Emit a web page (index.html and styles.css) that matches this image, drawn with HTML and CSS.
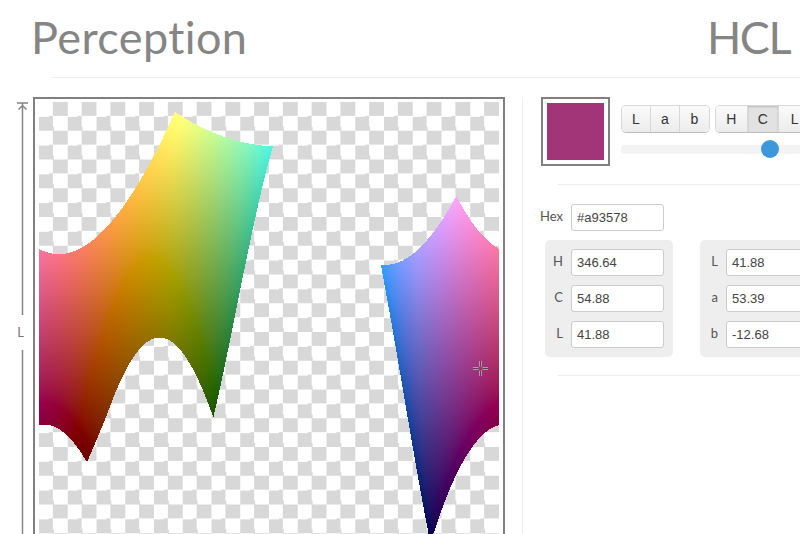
FILE: index.html
```html
<!DOCTYPE html>
<html>
<head>
  <title>Perception HCL</title>
  <link rel="stylesheet" href="styles.css">
</head>
<body>
  <header class="title-row">
    <h1>Perception</h1>
    <h2>HCL</h2>
  </header>
  <div class="title-rule"></div>

  <main class="content">
    <div class="axis">
      <svg class="axis-arrow" width="13" height="440" viewBox="0 0 13 440">
        <path d="M1 1H12M6.5 1.5V440M2.5 7.5L6.5 3.5L10.5 7.5" fill="none" stroke="#858585" stroke-width="1.5"/>
      </svg>
      <span class="axis-label">L</span>
    </div>

    <div class="plot">
      <div class="plot-area">
        <canvas id="slice" width="460" height="460"></canvas>
        <svg class="picker" width="17" height="17" viewBox="0 0 17 17">
          <path d="M8.5 1V6.5M8.5 10.5V16M1 8.5H6.5M10.5 8.5H16" stroke="#fff" stroke-opacity=".6" stroke-width="2.4"/>
          <path d="M8.5 1V6.5M8.5 10.5V16M1 8.5H6.5M10.5 8.5H16" stroke="#4a4a4a" stroke-width="1"/>
        </svg>
      </div>
    </div>

    <section class="side">
      <div class="color-row">
        <div class="swatch"><div class="swatch-fill"></div></div>
        <div class="controls">
          <div class="button-row">
            <div class="btn-group">
              <button>L</button><button>a</button><button>b</button>
            </div>
            <div class="btn-group wide">
              <button>H</button><button class="active">C</button><button>L</button>
            </div>
          </div>
          <div class="slider"><span class="knob"></span></div>
        </div>
      </div>

      <hr class="divider">

      <div class="field hex-field">
        <label for="hex">Hex</label>
        <input type="text" id="hex" value="#a93578">
      </div>

      <div class="panels">
        <div class="panel">
          <div class="field"><label>H</label><input type="text" value="346.64"></div>
          <div class="field"><label>C</label><input type="text" value="54.88"></div>
          <div class="field"><label>L</label><input type="text" value="41.88"></div>
        </div>
        <div class="panel">
          <div class="field"><label>L</label><input type="text" value="41.88"></div>
          <div class="field"><label>a</label><input type="text" value="53.39"></div>
          <div class="field"><label>b</label><input type="text" value="-12.68"></div>
        </div>
      </div>

      <hr class="divider">
    </section>
  </main>

  <script src="plot.js"></script>
</body>
</html>
```

FILE: styles.css
```css
html, body { margin: 0; height: 534px; overflow: hidden; background: #fff; }
body { width: 800px; font-family: "Liberation Sans", Arial, sans-serif; color: #444; }

.title-row { display: flex; justify-content: space-between; height: 77px; padding: 0 10px 0 31px; box-sizing: border-box; }
h1, h2 { margin: 0; font-family: Lato, sans-serif; font-weight: 400; font-size: 45px; line-height: 75px; color: #858585; font-variant-ligatures: none; }
h1 { letter-spacing: .4px; }
h2 { letter-spacing: -1.5px; }
.title-rule { height: 1px; margin-left: 51px; background: #eee; }

.content { display: flex; width: 1000px; padding-top: 19px; }

.axis { position: relative; flex: none; width: 33px; padding: 5px 0 0 16px; box-sizing: border-box; }
.axis-arrow { display: block; }
.axis-label { position: absolute; left: 15px; top: 218px; width: 11px; padding: 9px 0; background: #fff; text-align: center; font-family: Lato, sans-serif; font-size: 13px; line-height: 17px; color: #777; }

.plot { flex: none; border: 2px solid #808080; padding: 3px 4px; }
.plot-area { position: relative; width: 460px; height: 460px; background: #fff conic-gradient(#d8d8d8 25%, #fff 0 50%, #d8d8d8 0 75%, #fff 0) 0 0 / 28.75px 28.75px; }
#slice { display: block; }
.picker { position: absolute; left: 433px; top: 258px; }

.side { flex: none; width: 300px; margin-left: 17px; padding-left: 18px; border-left: 1px solid #eee; }

.color-row { display: flex; }
.swatch { flex: none; width: 69px; height: 69px; padding: 4px; border: 2px solid #808080; box-sizing: border-box; }
.swatch-fill { height: 100%; background: #a23478; }

.controls { margin: 8px 0 0 11px; }
.button-row { display: flex; gap: 5px; }
.btn-group { display: flex; border: 1px solid #d8d8d8; border-bottom-color: #bdbdbd; border-radius: 5px; overflow: hidden; }
button { width: 29px; height: 26px; padding: 0; border: 0; border-right: 1px solid #d8d8d8; background: linear-gradient(#fbfbfb, #ececec); font: 14px "Liberation Sans", Arial, sans-serif; color: #333; }
button:last-child { border-right: 0; }
.wide button { width: 31.5px; }
button.active { background: #e2e2e2; box-shadow: inset 0 1px 2px #bbb; }

.slider { position: relative; width: 240px; height: 9px; margin-top: 12px; background: #f3f3f3; border-radius: 4px; }
.knob { position: absolute; left: 140px; top: -5px; width: 18px; height: 18px; background: #3d97dc; border-radius: 50%; }

.divider { height: 1px; margin: 18px 0 0 17px; border: 0; background: #eee; }

.field { display: flex; align-items: center; gap: 8px; }
.field label { flex: none; width: 9px; padding-bottom: 3px; display: flex; justify-content: flex-end; font-family: Lato, sans-serif; font-size: 13px; color: #555; }
input { width: 93px; height: 27px; padding: 0 5px; box-sizing: border-box; border: 1px solid #ccc; border-radius: 3px; background: #fff; font: 13px "Liberation Sans", Arial, sans-serif; color: #444; }

.hex-field { margin: 19px 0 0 -1px; }
.hex-field label { width: 23px; }

.panels { display: flex; gap: 27px; margin: 9px 0 0 4px; }
.panel { flex: none; display: flex; flex-direction: column; gap: 9px; width: 128px; padding: 9px; box-sizing: border-box; background: #eee; border-radius: 5px; }
```

FILE: plot.js
```js
// slice of HCL at a fixed chroma: x is hue, y is lightness
var chroma = 54.88;
var canvas = document.getElementById('slice');
var ctx = canvas.getContext('2d');
var size = canvas.width;
var img = ctx.createImageData(size, size);

function labInv(t) {
  return t > 6 / 29 ? t * t * t : 3 * (6 / 29) * (6 / 29) * (t - 4 / 29);
}

function gamma(c) {
  c = Math.max(0, Math.min(1, c));
  return c <= 0.0031308 ? 12.92 * c : 1.055 * Math.pow(c, 1 / 2.4) - 0.055;
}

for (var py = 0; py < size; py++) {
  var l = 100 * (1 - py / size);
  for (var px = 0; px < size; px++) {
    var h = (px / size) * 2 * Math.PI;
    var a = chroma * Math.cos(h);
    var b = chroma * Math.sin(h);
    var fy = (l + 16) / 116;
    var X = 0.95047 * labInv(fy + a / 500);
    var Y = labInv(fy);
    var Z = 1.08883 * labInv(fy - b / 200);
    var r = 3.2404542 * X - 1.5371385 * Y - 0.4985314 * Z;
    var g = -0.969266 * X + 1.8760108 * Y + 0.041556 * Z;
    var bl = 0.0556434 * X - 0.2040259 * Y + 1.0572252 * Z;
    if (r < 0 || r > 1 || g < 0 || g > 1 || bl < 0 || bl > 1) continue;
    var m = Math.min(r, g);
    var i = (py * size + px) * 4;
    img.data[i] = gamma(0.9 * r + 0.2 * m + 0.07 * g) * 255;
    img.data[i + 1] = gamma(0.92 * g + 0.16 * m - 0.03 * r) * 255;
    img.data[i + 2] = gamma(1.05 * bl - 0.05 * r - 0.05 * g) * 255;
    img.data[i + 3] = 255;
  }
}
ctx.putImageData(img, 0, 0);
```
